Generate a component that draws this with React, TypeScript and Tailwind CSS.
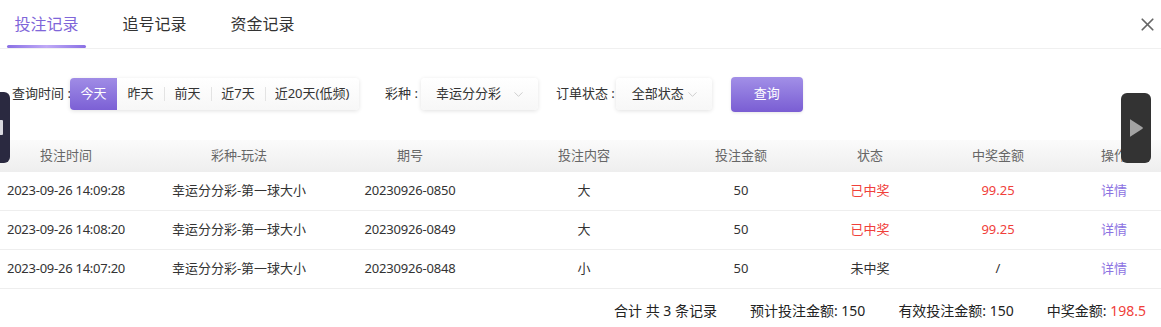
import { X, ChevronDown } from 'lucide-react'

const rows = [
    { time: '2023-09-26 14:09:28', game: '幸运分分彩-第一球大小', issue: '20230926-0850', content: '大', amount: '50', status: '已中奖', win: '99.25', won: true },
    { time: '2023-09-26 14:08:20', game: '幸运分分彩-第一球大小', issue: '20230926-0849', content: '大', amount: '50', status: '已中奖', win: '99.25', won: true },
    { time: '2023-09-26 14:07:20', game: '幸运分分彩-第一球大小', issue: '20230926-0848', content: '小', amount: '50', status: '未中奖', win: '/', won: false },
]

const headers = ['投注时间', '彩种-玩法', '期号', '投注内容', '投注金额', '状态', '中奖金额', '操作']

const cols = 'grid grid-cols-[132px_214px_128px_220px_94px_164px_92px_140px] w-[1184px]'

function Select({ value, width, textPad }: { value: string; width: string; textPad: string }) {
    return (
        <div
            className={`${width} h-[32px] rounded-[4px] bg-gradient-to-b from-white to-[#f7f7f7] shadow-[0_1px_4px_rgba(0,0,0,0.12)] flex items-center justify-between ${textPad} pr-[12px] text-[13px] text-[#333]`}
        >
            <span>{value}</span>
            <ChevronDown size={15} strokeWidth={1.1} className="text-[#bbb]" />
        </div>
    )
}

export default function App() {
    const days = ['昨天', '前天', '近7天', '近20天(低频)']
    const dayWidths = ['w-[47px]', 'w-[47px]', 'w-[54px]', 'w-[94px]']

    return (
        <div
            className="relative w-[1161px] h-[327px] bg-white overflow-hidden text-[#333]"
            style={{ fontFamily: '"Noto Sans", "Noto Sans CJK SC", sans-serif' }}
        >
            {/* tabs */}
            <div className="h-[49px] border-b border-[#f0f0f0] flex items-stretch pl-[7px] pr-[3px]">
                <div className="flex gap-[29px]">
                    <div className="relative w-[79px] flex items-center justify-center text-[16px] text-[#7f66d9]">
                        投注记录
                        <div className="absolute left-0 right-0 bottom-0 h-[3px] rounded-full bg-gradient-to-r from-[#8a6fe4] via-[#c0aaf6] to-[#8a6fe4]" />
                    </div>
                    <div className="w-[79px] flex items-center justify-center text-[16px] text-[#333]">追号记录</div>
                    <div className="w-[79px] flex items-center justify-center text-[16px] text-[#333]">资金记录</div>
                </div>
                <div className="ml-auto flex items-center">
                    <X size={21} strokeWidth={2} className="text-[#666]" />
                </div>
            </div>

            {/* filters */}
            <div className="flex items-center h-[34px] mt-[28px] pl-[12px] text-[13px] whitespace-nowrap">
                <span className="w-[58px] text-[#333]">查询时间 :</span>
                <div className="flex h-[32px] rounded-[4px] shadow-[0_1px_4px_rgba(0,0,0,0.12)] bg-gradient-to-b from-white to-[#f7f7f7]">
                    <div className="w-[47px] flex items-center justify-center rounded-l-[4px] text-white bg-gradient-to-b from-[#a08ce6] to-[#7c60d5]">
                        今天
                    </div>
                    {days.map((d, i) => (
                        <div key={d} className={`${dayWidths[i]} flex items-center justify-center relative`}>
                            {i > 0 && <div className="absolute left-0 top-[9px] h-[14px] w-px bg-[#e3e3e3]" />}
                            {d}
                        </div>
                    ))}
                </div>

                <span className="ml-[26px] mr-[3px]">彩种 :</span>
                <Select value="幸运分分彩" width="w-[117px]" textPad="pl-[15px]" />

                <span className="ml-[18px] mr-[1px]">订单状态 :</span>
                <Select value="全部状态" width="w-[96px]" textPad="pl-[16px]" />

                <button className="ml-[19px] w-[72px] h-[35px] rounded-[4px] bg-gradient-to-b from-[#a28fe7] to-[#7a5dd3] text-white text-[13px] shadow-[0_1px_3px_rgba(0,0,0,0.1)]">
                    查询
                </button>
            </div>

            {/* table */}
            <div className="mt-[29px] overflow-hidden">
                <div className={`${cols} h-[32px] bg-gradient-to-b from-[#fbfbfb] to-[#eeeeee] text-[13px] text-[#666]`}>
                    {headers.map((h) => (
                        <div key={h} className="flex items-center justify-center">{h}</div>
                    ))}
                </div>
                {rows.map((r) => (
                    <div key={r.issue} className={`${cols} h-[39px] border-b border-[#eeeeee] text-[13px] text-[#333]`}>
                        <div className="flex items-center justify-center tracking-[-0.25px]">{r.time}</div>
                        <div className="flex items-center justify-center">{r.game}</div>
                        <div className="flex items-center justify-center tracking-[-0.2px]">{r.issue}</div>
                        <div className="flex items-center justify-center">{r.content}</div>
                        <div className="flex items-center justify-center">{r.amount}</div>
                        <div className={`flex items-center justify-center ${r.won ? 'text-[#f0403a]' : ''}`}>{r.status}</div>
                        <div className={`flex items-center justify-center ${r.won ? 'text-[#f0403a]' : ''}`}>{r.win}</div>
                        <div className="flex items-center justify-center text-[#8c73e2]">详情</div>
                    </div>
                ))}
            </div>

            {/* summary */}
            <div className="flex justify-end items-center gap-[33px] pr-[15px] mt-[11px] text-[14px] text-[#222]">
                <span>合计 共 3 条记录</span>
                <span>预计投注金额: 150</span>
                <span>有效投注金额: 150</span>
                <span>
                    中奖金额: <span className="text-[#f0403a]">198.5</span>
                </span>
            </div>

            {/* side handles */}
            <div className="absolute left-0 top-[92px] w-[10px] h-[71px] rounded-r-[6px] bg-[#2a2940]">
                <div className="absolute left-0 top-[28px] w-[3px] h-[15px] bg-[#d9d9e0] rounded-r-[1px]" />
            </div>
            <div className="absolute left-[1121px] top-[93px] w-[30px] h-[70px] rounded-[6px] bg-[#333333] flex items-center justify-center">
                <svg width="16" height="20" viewBox="0 0 16 20">
                    <path d="M2 1.5 Q1.5 1 2.5 1.5 L14.5 9.2 Q15.3 10 14.5 10.8 L2.5 18.5 Q1.5 19 2 18.5 Z" fill="#a3a3a3" />
                </svg>
            </div>
        </div>
    )
}
